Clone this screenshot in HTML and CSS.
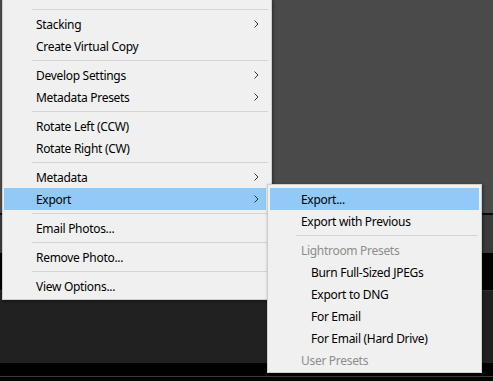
FILE: index.html
```html
<!DOCTYPE html>
<html>
<head>
<meta charset="UTF-8">
<title>Library context menu</title>
<link rel="stylesheet" href="styles.css">
</head>
<body>
	<div class="app">
		<div class="band bandTop"></div>
		<div class="band bandRule"></div>
		<div class="band bandMid"></div>
		<div class="band bandBlack"></div>
		<div class="band bandDark"></div>
		<div class="band bandFoot"></div>
	</div>

	<div class="menu mainMenu">
		<div class="sep"></div>
		<div class="item">Stacking<svg class="arrow" width="5" height="8" viewBox="0 0 5 8"><path d="M0.5 0.5 L4 4 L0.5 7.5"/></svg></div>
		<div class="item">Create Virtual Copy</div>
		<div class="sep"></div>
		<div class="item">Develop Settings<svg class="arrow" width="5" height="8" viewBox="0 0 5 8"><path d="M0.5 0.5 L4 4 L0.5 7.5"/></svg></div>
		<div class="item">Metadata Presets<svg class="arrow" width="5" height="8" viewBox="0 0 5 8"><path d="M0.5 0.5 L4 4 L0.5 7.5"/></svg></div>
		<div class="sep"></div>
		<div class="item">Rotate Left (CCW)</div>
		<div class="item">Rotate Right (CW)</div>
		<div class="sep"></div>
		<div class="item">Metadata<svg class="arrow" width="5" height="8" viewBox="0 0 5 8"><path d="M0.5 0.5 L4 4 L0.5 7.5"/></svg></div>
		<div class="item active">Export<svg class="arrow" width="5" height="8" viewBox="0 0 5 8"><path d="M0.5 0.5 L4 4 L0.5 7.5"/></svg></div>
		<div class="sep"></div>
		<div class="item">Email Photos...</div>
		<div class="sep"></div>
		<div class="item">Remove Photo...</div>
		<div class="sep"></div>
		<div class="item">View Options...</div>
	</div>

	<div class="menu subMenu">
		<div class="item active">Export...</div>
		<div class="item">Export with Previous</div>
		<div class="sep"></div>
		<div class="item header">Lightroom Presets</div>
		<div class="item preset">Burn Full-Sized JPEGs</div>
		<div class="item preset">Export to DNG</div>
		<div class="item preset">For Email</div>
		<div class="item preset">For Email (Hard Drive)</div>
		<div class="item header">User Presets</div>
	</div>
</body>
</html>
```
FILE: styles.css
```css
body {
	margin: 0px;
	width: 493px;
	height: 381px;
	overflow: hidden;
	position: relative;
	font-family: "Segoe UI", "Noto Sans", "Liberation Sans", sans-serif;
	font-size: 12px;
	letter-spacing: -0.3px;
	color: #000;
}

.app {
	display: flex;
	flex-direction: column;
	height: 381px;
}

.band {
	flex: none;
}

.bandTop {
	height: 213px;
	background: #4a4a4a;
}

.bandRule {
	height: 2px;
	background: #0a0a0a;
}

.bandMid {
	height: 38px;
	background: #3a3a3a;
}

.bandBlack {
	height: 37px;
	background: #000;
}

.bandDark {
	height: 72px;
	background: #212121;
	border-top: 1px solid #2e2e2e;
}

.bandFoot {
	height: 18px;
	background: linear-gradient(to bottom, #000 13px, #3c3c3c 13px, #3c3c3c 14px, #000 14px);
}

/* menus sit on top of the app */
.menu {
	position: absolute;
	box-sizing: border-box;
	background: #f0f0f0;
	border: 1px solid #cfcfcf;
	box-shadow: 1px 1px 3px rgba(0, 0, 0, 0.45);
}

.mainMenu {
	left: 2px;
	top: -1px;
	width: 270px;
	padding: 6px 5px 2px 1px;
}

.subMenu {
	left: 267px;
	top: 184px;
	width: 215px;
	padding: 3px 2px 1px 2px;
}

.item {
	position: relative;
	height: 22px;
	line-height: 23px;
	white-space: nowrap;
}

.mainMenu .item {
	padding-left: 32px;
}

.subMenu .item {
	padding-left: 31px;
}

.subMenu .preset {
	padding-left: 41px;
}

.item.header {
	color: #8d8d8d;
}

.item.active {
	background: #91c9f7;
}

.arrow {
	position: absolute;
	right: 7px;
	top: 7px;
}

.arrow path {
	fill: none;
	stroke: #333;
	stroke-width: 1;
}

.sep {
	height: 1px;
	margin: 3px 0px;
	background: #d4d4d4;
}

.mainMenu .sep {
	margin-left: 28px;
	margin-right: -2px;
}

.subMenu .sep {
	margin-left: 26px;
	margin-right: 1px;
}
```
